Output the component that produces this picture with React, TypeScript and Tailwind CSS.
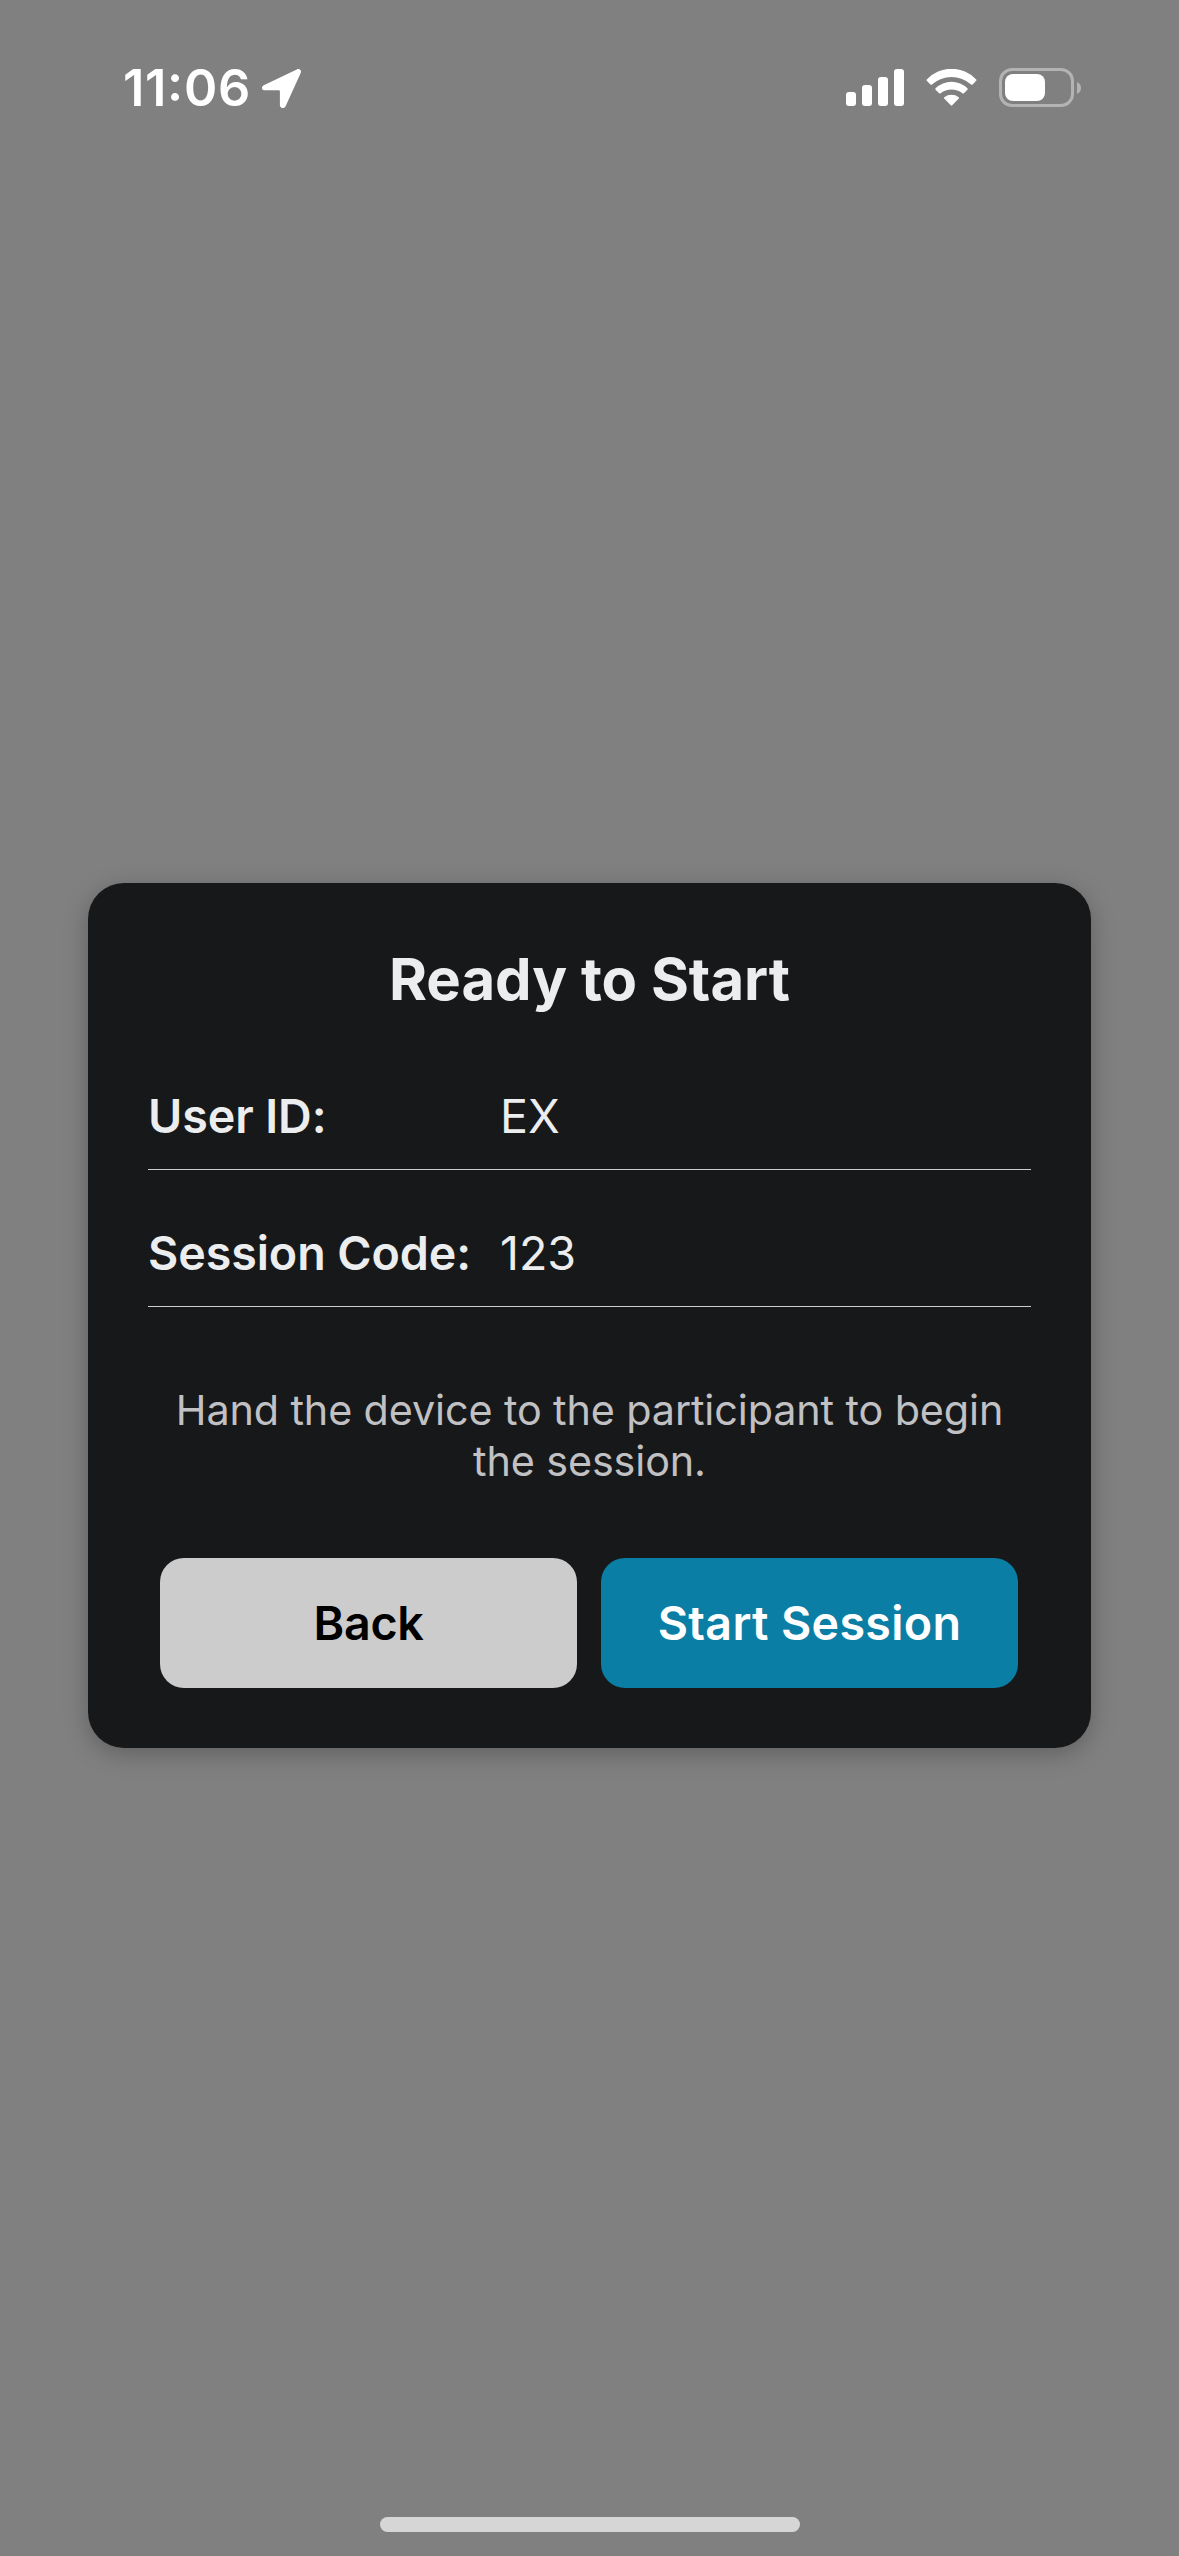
type RowProps = { label: string; value: string };

function InfoRow({ label, value }: RowProps) {
  return (
    <div className="flex border-b border-[#cccccc] pb-6 text-[46.6px] leading-[58px]">
      <span className="w-[352px] shrink-0 whitespace-nowrap font-semibold tracking-[-0.08px]">{label}</span>
      <span className="flex-1">{value}</span>
    </div>
  );
}

function LocationArrow() {
  return (
    <svg className="h-[39px] w-[39px]" viewBox="0 0 39 39" fill="currentColor">
      <path d="M1.8 16.2 34.8 .5C37.7-.8 39.9 1.3 38.6 4.2L23.6 37.2C22.3 40 17.9 39.6 17.9 36V22.3Q17.9 21.2 16.8 21.2H2.9C-.7 21.2-1 17.5 1.8 16.2Z" />
    </svg>
  );
}

function Signal() {
  return (
    <div className="flex h-[37px] items-end gap-1.5">
      <span className="h-3.5 w-2.5 rounded-[3px] bg-white" />
      <span className="h-[21px] w-2.5 rounded-[3px] bg-white" />
      <span className="h-[29px] w-2.5 rounded-[3px] bg-white" />
      <span className="h-[37px] w-2.5 rounded-[3px] bg-white" />
    </div>
  );
}

function Wifi() {
  return (
    <svg className="h-[37px] w-[51px]" viewBox="0 0 51 37" fill="currentColor">
      <path d="M.8 10.4A34 34 0 0 1 50.2 10.4Q50.9 11.1 50.2 11.8L46.6 15.4Q45.9 16.1 45.1 15.4A29.8 29.8 0 0 0 5.9 15.4Q5.1 16.1 4.4 15.4L.8 11.8Q.1 11.1 .8 10.4Z" />
      <path d="M9.6 19.3A22.8 22.8 0 0 1 41.4 19.3Q42.1 20 41.4 20.7L37.9 24.2Q37.2 24.9 36.4 24.2A18 18 0 0 0 14.6 24.2Q13.8 24.9 13.1 24.2L9.6 20.7Q8.9 20 9.6 19.3Z" />
      <path d="M18.3 28.2A11.8 11.8 0 0 1 32.7 28.2Q33.5 28.9 32.8 29.6L26.2 36.3Q25.5 37 24.8 36.3L18.2 29.6Q17.5 28.9 18.3 28.2Z" />
    </svg>
  );
}

function Battery() {
  return (
    <div className="flex items-center gap-[3px]">
      <div className="flex h-[39px] w-[75px] items-center rounded-[13px] border-3 border-[#b3b3b3] p-[3px]">
        <span className="h-[27px] w-10 rounded-[8px] bg-white" />
      </div>
      <svg className="h-3 w-1" viewBox="0 0 4 12" fill="#b3b3b3">
        <path d="M0 0C2.4 .9 4 3.2 4 6S2.4 11.1 0 12Z" />
      </svg>
    </div>
  );
}

export default function App() {
  return (
    <div className="flex h-[2556px] w-[1179px] flex-col bg-[#808080] font-['Inter',sans-serif]">
      <header className="flex justify-between pt-[58px] pr-[98px] pl-[123px] text-white">
        <div className="flex items-start">
          <span className="w-[139px] text-[50.5px] leading-[60px] font-semibold tracking-[0.7px] [font-feature-settings:'calt','case']">
            11:06
          </span>
          <div className="pt-[11px]">
            <LocationArrow />
          </div>
        </div>
        <div className="flex items-start">
          <div className="pt-[11px] pr-[22px]">
            <Signal />
          </div>
          <div className="pt-[11px] pr-[22px]">
            <Wifi />
          </div>
          <div className="pt-2.5">
            <Battery />
          </div>
        </div>
      </header>

      <main className="mx-[88px] mt-[765px] flex h-[865px] flex-col rounded-[36px] bg-[#17181a] px-[60px] py-[60px] text-[#ecedee] shadow-[0_6px_24px_rgba(0,0,0,0.25)]">
        <h1 className="text-center text-[58px] leading-[72px] font-bold">Ready to Start</h1>
        <div className="mt-[72px] flex flex-col gap-[54px]">
          <InfoRow label="User ID:" value="EX" />
          <InfoRow label="Session Code:" value="123" />
        </div>
        <p className="mt-[78px] text-center text-[41.3px] leading-[51px] tracking-[-0.11px] text-[#c1c1c4]">
          Hand the device to the participant to begin the session.
        </p>
        <div className="mt-[71px] mr-px flex gap-6 px-3 text-[46.6px] font-semibold">
          <button className="h-[130px] flex-1 rounded-3xl bg-[#cccccc] pt-0.5 tracking-[-0.3px] text-black">Back</button>
          <button className="h-[130px] flex-1 rounded-3xl bg-[#0a7ea4] pt-0.5 tracking-[0.33px] text-white">
            Start Session
          </button>
        </div>
      </main>

      <div className="mt-auto mb-6 h-[15px] w-[420px] self-center rounded-full bg-[#d6d6d6]" />
    </div>
  );
}
